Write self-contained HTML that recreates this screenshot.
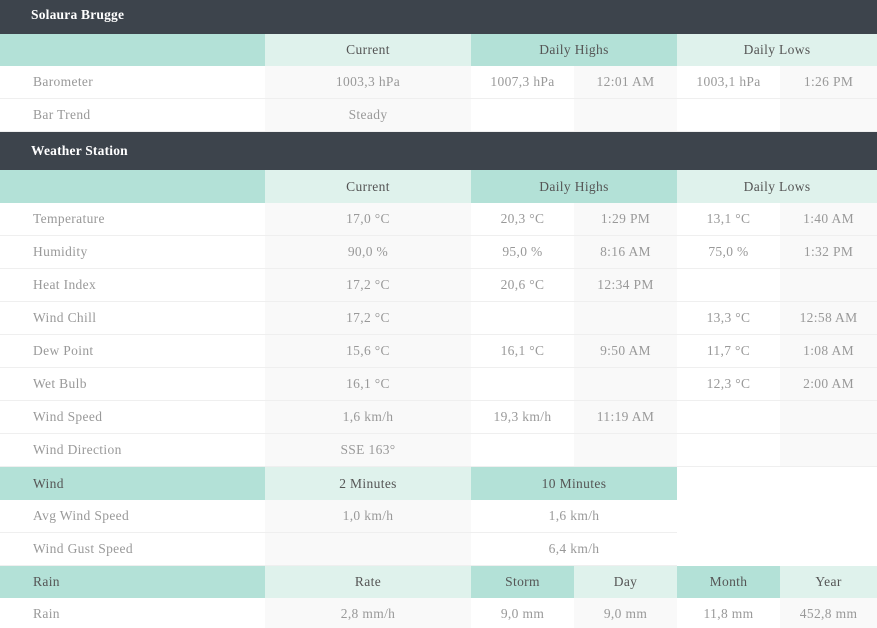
<!DOCTYPE html>
<html><head><meta charset="utf-8"><style>
html,body{margin:0;padding:0;background:#fff;width:877px;height:628px;overflow:hidden}
table{border-collapse:collapse;table-layout:fixed;width:877px;font-family:"Liberation Serif","DejaVu Serif",serif;font-size:13.5px;letter-spacing:0.35px;color:#999}
td{padding:0;text-align:center;height:32px;border-bottom:1px solid #efefef;white-space:nowrap}
td.l{text-align:left;padding-left:33px}
tr.d td{background:#3d444c;color:#fff;font-weight:bold;text-align:left;padding-left:31px;border:0;letter-spacing:0.2px}
tr.h td{color:#555;border:0}
tr.h2 td{height:33px}
.t{background:#b3e1d7}.lt{background:#dff2ec}.g{background:#f9f9f9}.w{background:#fff}
</style></head><body>
<table>
<colgroup><col style="width:265px"><col style="width:206px"><col style="width:103px"><col style="width:103px"><col style="width:103px"><col style="width:97px"></colgroup>
<tr class="d"><td colspan="6" style="vertical-align:top;padding-top:7px;height:27px">Solaura Brugge</td></tr>
<tr class="h"><td class="t"></td><td class="lt">Current</td><td class="t" colspan="2">Daily Highs</td><td class="lt" colspan="2">Daily Lows</td></tr>
<tr><td class="l">Barometer</td><td class="g">1003,3 hPa</td><td>1007,3 hPa</td><td class="g">12:01 AM</td><td>1003,1 hPa</td><td class="g">1:26 PM</td></tr>
<tr><td class="l">Bar Trend</td><td class="g">Steady</td><td></td><td class="g"></td><td></td><td class="g"></td></tr>
<tr class="d"><td colspan="6" style="height:38px">Weather Station</td></tr>
<tr class="h h2"><td class="t"></td><td class="lt">Current</td><td class="t" colspan="2">Daily Highs</td><td class="lt" colspan="2">Daily Lows</td></tr>
<tr><td class="l">Temperature</td><td class="g">17,0 °C</td><td>20,3 °C</td><td class="g">1:29 PM</td><td>13,1 °C</td><td class="g">1:40 AM</td></tr>
<tr><td class="l">Humidity</td><td class="g">90,0 %</td><td>95,0 %</td><td class="g">8:16 AM</td><td>75,0 %</td><td class="g">1:32 PM</td></tr>
<tr><td class="l">Heat Index</td><td class="g">17,2 °C</td><td>20,6 °C</td><td class="g">12:34 PM</td><td></td><td class="g"></td></tr>
<tr><td class="l">Wind Chill</td><td class="g">17,2 °C</td><td></td><td class="g"></td><td>13,3 °C</td><td class="g">12:58 AM</td></tr>
<tr><td class="l">Dew Point</td><td class="g">15,6 °C</td><td>16,1 °C</td><td class="g">9:50 AM</td><td>11,7 °C</td><td class="g">1:08 AM</td></tr>
<tr><td class="l">Wet Bulb</td><td class="g">16,1 °C</td><td></td><td class="g"></td><td>12,3 °C</td><td class="g">2:00 AM</td></tr>
<tr><td class="l">Wind Speed</td><td class="g">1,6 km/h</td><td>19,3 km/h</td><td class="g">11:19 AM</td><td></td><td class="g"></td></tr>
<tr><td class="l">Wind Direction</td><td class="g">SSE 163°</td><td></td><td class="g"></td><td></td><td class="g"></td></tr>
<tr class="h h2"><td class="t l" style="color:#555">Wind</td><td class="lt">2 Minutes</td><td class="t" colspan="2">10 Minutes</td><td class="w" colspan="2"></td></tr>
<tr><td class="l">Avg Wind Speed</td><td class="g">1,0 km/h</td><td colspan="2">1,6 km/h</td><td colspan="2" style="border:0"></td></tr>
<tr><td class="l">Wind Gust Speed</td><td class="g"></td><td colspan="2">6,4 km/h</td><td colspan="2" style="border:0"></td></tr>
<tr class="h"><td class="t l" style="color:#555">Rain</td><td class="lt">Rate</td><td class="t">Storm</td><td class="lt">Day</td><td class="t">Month</td><td class="lt">Year</td></tr>
<tr><td class="l">Rain</td><td class="g">2,8 mm/h</td><td>9,0 mm</td><td class="g">9,0 mm</td><td>11,8 mm</td><td class="g">452,8 mm</td></tr>
</table>
</body></html>
